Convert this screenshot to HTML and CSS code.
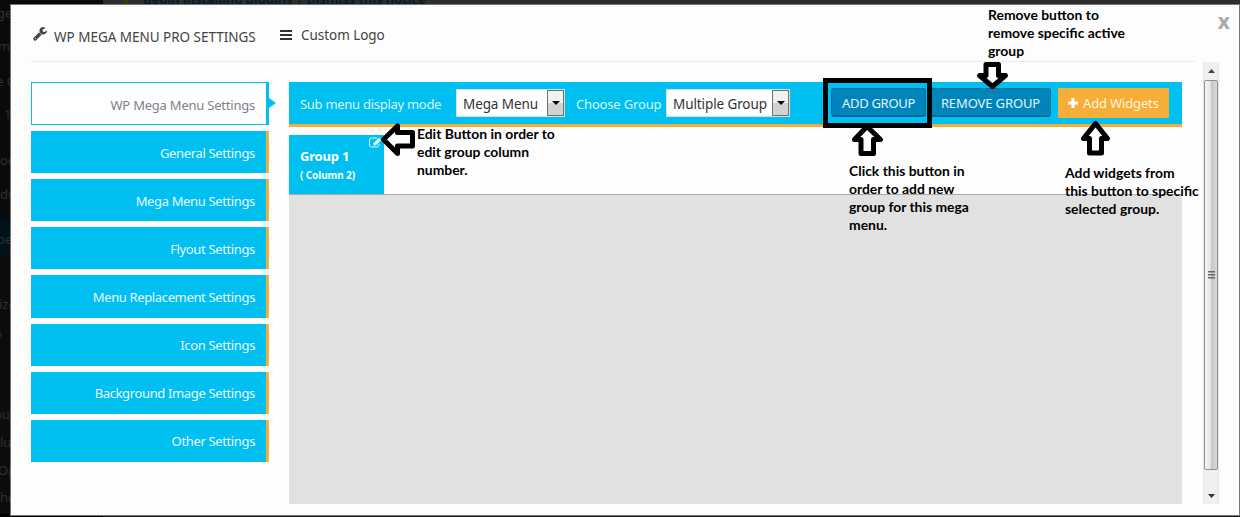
FILE: index.html
```html
<!DOCTYPE html>
<html lang="en">
<head>
<meta charset="utf-8">
<title>WP Mega Menu Pro Settings</title>
<link rel="stylesheet" href="styles.css">
</head>
<body>
<div class="backdrop">
  <div class="admin-menu">
    <span class="ghost g1">ges</span><span class="ghost g2">mm</span><span class="ghost g3">e C</span><span class="ghost g4">1</span>
    <span class="ghost g5">oo</span><span class="ghost g6">du</span><span class="ghost g7">pe</span><span class="ghost g8">ize</span>
    <span class="ghost g9">s</span><span class="ghost g10">ou</span><span class="ghost g11">lu</span><span class="ghost g12">Op</span><span class="ghost g13">he</span>
  </div>
  <div class="notice">Begin installing plugins | Dismiss this notice</div>
</div>
<main class="modal">
  <button class="close">x</button>
  <header class="head">
    <svg class="wrench" width="14" height="14" viewBox="0 0 1664 1664"><path fill="#444" d="M384 1344q0-26-19-45t-45-19-45 19-19 45 19 45 45 19 45-19 19-45zm644-420l-682 682q-37 37-90 37-52 0-91-37l-106-108q-38-36-38-90 0-53 38-91l681-681q39 98 114.500 173.500t173.500 114.500zm634-435q0 39-23 106-47 134-164.500 217.500t-258.500 83.500q-185 0-316.500-131.500t-131.500-316.500 131.500-316.500 316.500-131.500q58 0 121.500 16.500t107.500 46.500q16 11 16 28t-16 28l-293 169v224l193 107q5-3 79-48.500t135.500-81 70.500-35.500q15 0 23.500 10t8.500 25z"/></svg>
    <span class="title">WP MEGA MENU PRO SETTINGS</span>
    <svg class="bars" width="12" height="11" viewBox="0 0 12 11"><path fill="#333" d="M0 0h12v2H0zM0 4h12v2H0zM0 8h12v2H0z"/></svg>
    <span class="sub">Custom Logo</span>
  </header>
  <div class="content">
    <nav class="tabs">
      <a class="tab active"><span>WP Mega Menu Settings</span></a>
      <a class="tab"><span>General Settings</span></a>
      <a class="tab"><span>Mega Menu Settings</span></a>
      <a class="tab"><span>Flyout Settings</span></a>
      <a class="tab"><span>Menu Replacement Settings</span></a>
      <a class="tab"><span>Icon Settings</span></a>
      <a class="tab"><span>Background Image Settings</span></a>
      <a class="tab"><span>Other Settings</span></a>
    </nav>
    <section class="panel">
      <div class="toolbar">
        <span class="label mode">Sub menu display mode</span>
        <div class="select s1"><span>Mega Menu</span><i><svg width="8" height="4"><path d="M0 0h8L4 4z"/></svg></i></div>
        <span class="label choose">Choose Group</span>
        <div class="select s2"><span>Multiple Group</span><i><svg width="8" height="4"><path d="M0 0h8L4 4z"/></svg></i></div>
        <button class="btn add">ADD GROUP</button>
        <button class="btn remove">REMOVE GROUP</button>
        <button class="widgets"><svg width="10" height="10"><path fill="#fff" d="M3.500 0h3v3.500H10v3H6.500V10h-3V6.500H0v-3h3.500z"/></svg><span>Add Widgets</span></button>
      </div>
      <div class="groups">
        <div class="group">
          <svg class="edit" width="13" height="11" viewBox="0 0 13 11"><path fill="none" stroke="#d5f5ff" d="M8 1H2.500Q.5 1 .5 3v5q0 2 2 2H8q2 0 2-2V7"/><path fill="#e6faff" d="M4.500 8.500V6.200L10 .7l2.300 2.200-5.500 5.600z"/></svg>
          <strong>Group 1</strong>
          <small>( Column 2)</small>
        </div>
      </div>
      <div class="canvas"></div>
    </section>
    <div class="scroll">
      <span class="arrow"><svg width="7" height="4"><path fill="#444" d="M0 4h7L3.500 0z"/></svg></span>
      <div class="thumb"><svg width="7" height="8"><path fill="#666" d="M0 0h7v1.500H0zM0 3h7v1.500H0zM0 6h7v1.500H0z"/></svg></div>
      <span class="arrow down"><svg width="7" height="4"><path fill="#333" d="M0 0h7L3.500 4z"/></svg></span>
    </div>
  </div>
</main>
<div class="frame"></div>
<svg class="arrows" width="1240" height="517" viewBox="0 0 1240 517">
  <g fill="#fff" stroke="#000" stroke-width="5" stroke-linejoin="round">
    <path d="M383.500 139.500 397.500 126v6.500h15V146h-15v7.500z"/>
    <path d="M867 126.500 880.500 139.500h-7v14H861v-14h-6.500z"/>
    <path d="M986 64.500h12.500v11h7l-13 11-13-11h6.500z"/>
    <path d="M1095.500 123.500 1107.500 138.500h-6V153h-12v-14.500h-6z"/>
  </g>
</svg>
<p class="note n-edit">Edit Button in order to<br>edit group column<br>number.</p>
<p class="note n-add">Click this button in<br>order to add new<br>group for this mega<br>menu.</p>
<p class="note n-remove">Remove button to<br>remove specific active<br>group</p>
<p class="note n-widgets">Add widgets from<br>this button to specific<br>selected group.</p>
</body>
</html>
```
FILE: styles.css
```css
* { box-sizing: border-box; }
body { margin: 0; height: 517px; position: relative; overflow: hidden; background: #1b191b; font-family: "Noto Sans", sans-serif; font-size: 13px; }
button { font-family: inherit; border: 0; padding: 0; margin: 0; }
svg { display: block; flex: none; }

/* dimmed admin page behind the dialog */
.backdrop { position: absolute; inset: 0; background: linear-gradient(#2d2d2d 0 10px, #1b191b 10px); overflow: hidden; }
.admin-menu { position: absolute; left: 0; top: 0; width: 103px; height: 517px; background: linear-gradient(#090a0b 0 220px, #00121b 220px 254px, #0b0c0d 254px 514px, #000 514px); }
.ghost { position: absolute; left: 0; line-height: 18px; color: #2f3031; }
.g1 { top: 4px; left: -3px; } .g2 { top: 37px; left: -2px; } .g3 { top: 72px; left: -4px; } .g4 { top: 105px; left: 4px; }
.g5 { top: 151px; } .g6 { top: 185px; } .g7 { top: 230px; left: -3px; } .g8 { top: 295px; left: -1px; } .g9 { top: 323px; left: -4px; }
.g10 { top: 405px; left: -6px; } .g11 { top: 433px; } .g12 { top: 461px; left: -2px; } .g13 { top: 488px; }
.notice { position: absolute; left: 125px; top: -10px; height: 18px; padding-left: 14px; border-left: 4px solid #443200; color: #051c28; font-weight: 700; line-height: 18px; font-size: 13px; letter-spacing: -.1px; }

/* dialog */
.modal { position: absolute; left: 10px; top: 4px; width: 1230px; height: 512px; border: 1px solid #777; background: #fdfdfd; padding: 0 20px; }
.close { position: absolute; right: 9px; top: 4px; background: none; color: #a9a9a9; font: 700 21px/24px "Noto Sans", sans-serif; }
.head { display: flex; width: 1164px; height: 57px; border-bottom: 1px solid #ebebeb; color: #444; white-space: nowrap; }
.wrench { margin: 22px 0 0 2px; }
.title { margin: 23px 0 0 7px; line-height: 18px; width: 226px; font-size: 13.5px; letter-spacing: -.02px; }
.bars { margin-top: 25px; }
.sub { margin: 21px 0 0 9px; line-height: 18px; font-size: 13.5px; letter-spacing: -.05px; }
.content { display: flex; height: 442px; }

.tabs { display: flex; flex-direction: column; gap: 6px; width: 238px; padding-top: 20px; margin-right: 20px; }
.tab { position: relative; display: flex; align-items: center; justify-content: flex-end; height: 42.15px; padding: 1px 11px 0 0; background: #00bff1; border-right: 3px solid #f7ae38; color: #e9faff; letter-spacing: -.36px; white-space: nowrap; }
.tab.active { height: 43px; padding-top: 2px; background: #fff; border: 1px solid #00bff1; border-right-width: 3px; color: #7d818b; letter-spacing: -.22px; }
.tab.active::after { content: ""; position: absolute; right: -10px; top: 15px; border: 5px solid transparent; border-left: 7px solid #00bff1; border-right: 0; }

.panel { display: flex; flex-direction: column; width: 893px; padding-top: 20px; }
.toolbar { display: flex; height: 45px; background: #00bff1; border-bottom: 3px solid #f7ae38; white-space: nowrap; }
.label { color: #d8f6ff; line-height: 18px; margin-top: 13px; }
.mode { margin-left: 11px; width: 156px; letter-spacing: -.28px; }
.choose { margin-left: 11px; width: 90px; letter-spacing: -.17px; }
.select { display: flex; justify-content: space-between; height: 28px; margin-top: 7px; background: #fff; border: 1px solid #ddd; color: #333; line-height: 28px; padding-left: 6px; font-size: 13.500px; letter-spacing: -.1px; }
.s1 { width: 109px; } .s2 { width: 124px; }
.select i { display: flex; align-items: center; justify-content: center; width: 17px; border: 1px solid #707070; background: linear-gradient(#f2f2f2 50%, #d2d2d2 50%); }
.btn { height: 29px; margin-top: 6px; padding-top: 2px; background: #0085ba; border: 1px solid #0073a5; border-bottom: 2px solid #006799; border-radius: 3px; color: #e4f5fc; font-size: 13px; }
.add { width: 95px; margin-left: 41px; letter-spacing: -.3px; }
.remove { width: 121px; margin-left: 4px; letter-spacing: -.12px; }
.widgets { display: flex; align-items: center; gap: 5px; height: 30px; width: 111px; margin: 6px 0 0 7px; padding-left: 10px; background: #f7ae38; color: #fff5dd; font-size: 13px; letter-spacing: -.15px; }
.groups { height: 67px; padding-top: 8px; }
.group { position: relative; display: flex; flex-direction: column; width: 95px; height: 59px; padding: 12px 0 0 11px; background: #00bff1; color: #fff; }
.group strong { font-size: 13px; line-height: 19px; letter-spacing: -.2px; }
.group small { font-size: 10px; font-weight: 700; line-height: 18px; letter-spacing: -.1px; }
.edit { position: absolute; left: 80px; top: 2px; }
.canvas { flex: 1; background: #e1e1e1; border-top: 1px solid #aaa; }

.scroll { display: flex; flex-direction: column; width: 16px; margin-left: 21px; background: #f0f0f0; border: solid #e5e5e5; border-width: 0 1px; }
.arrow { display: flex; justify-content: center; height: 18px; padding-top: 7px; }
.thumb { display: flex; align-items: center; justify-content: center; height: 390px; border: 1px solid #909090; border-radius: 2px; background: linear-gradient(90deg, #f7f7f7, #e3e3e6 48%, #c5c6cb 52%, #d8d8dc); }
.down { padding-top: 24px; height: 34px; }

/* annotations drawn over the dialog */
.frame { position: absolute; left: 823px; top: 78px; width: 109px; height: 50px; border: 5px solid #000; }
.arrows { position: absolute; left: 0; top: 0; }
.note { position: absolute; margin: 0; color: #000; font: 700 13.900px/18px Lato, sans-serif; white-space: nowrap; }
.n-edit { left: 417px; top: 125px; }
.n-add { left: 849px; top: 162px; }
.n-remove { left: 988px; top: 6px; }
.n-widgets { left: 1065px; top: 164px; }
```
